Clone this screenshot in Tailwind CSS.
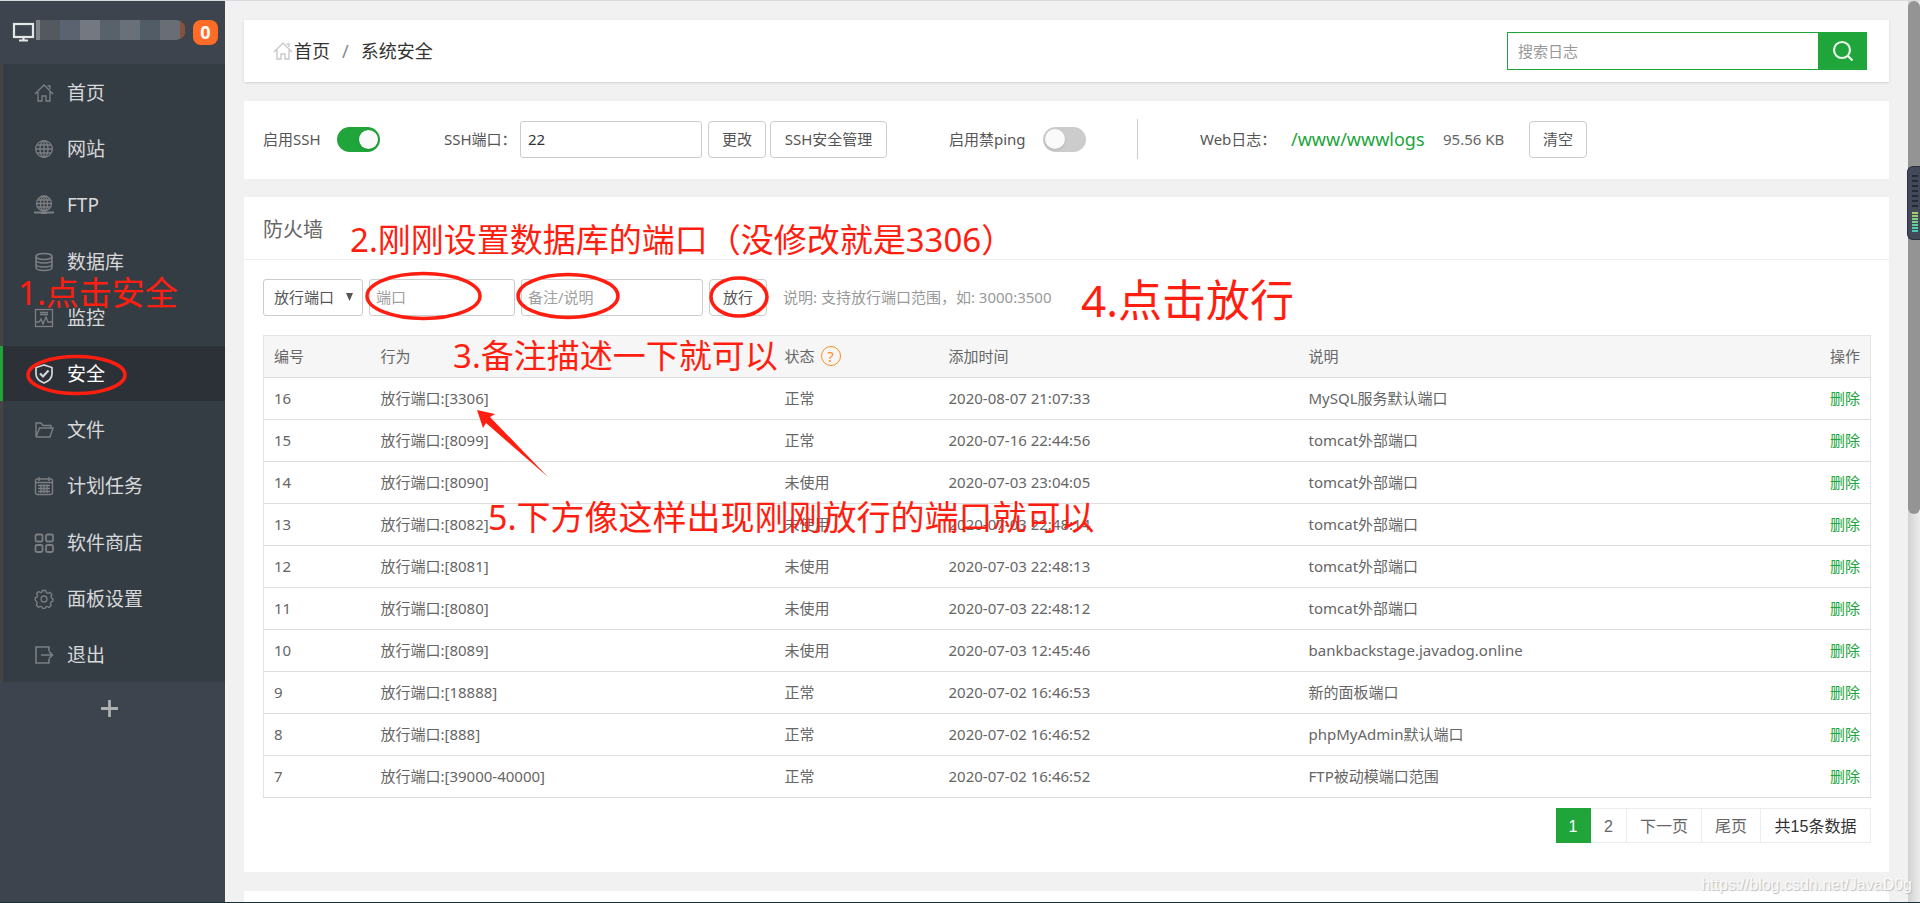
<!DOCTYPE html>
<html lang="zh-CN">
<head>
<meta charset="utf-8">
<title>系统安全</title>
<script src="https://cdn.jsdelivr.net/npm/@tailwindcss/browser@4"></script>
</head>
<body class="relative h-screen overflow-hidden bg-[#f1f1f1] font-['Noto_Sans','Noto_Sans_CJK_SC',sans-serif] text-[15px] leading-5 text-[#555]">
<div class="flex h-full border-t border-[#d9dade]">

  <aside class="flex w-[225px] shrink-0 flex-col bg-[#3d444d]">
    <div class="flex h-[63px] items-start pl-3 pt-[19px]">
      <svg class="h-6 w-6 shrink-0" viewBox="0 0 24 24" fill="none" stroke="#e4e6e8"><rect x="2" y="4" width="19" height="13" stroke-width="2.200"/><path d="M11.500 17v4M7 20.500h9" stroke-width="2.200"/></svg>
      <div class="flex h-5 w-[150px] overflow-hidden rounded-r-full">
        <span class="w-1 bg-[#81858b]"></span><span class="w-5 bg-[#53595f]"></span><span class="w-5 bg-[#5b6370]"></span><span class="w-5 bg-[#747880]"></span><span class="w-5 bg-[#59616a]"></span><span class="w-5 bg-[#6a7078]"></span><span class="w-5 bg-[#525c66]"></span><span class="w-5 bg-[#696d74]"></span><span class="w-[5px] bg-[#84523d]"></span>
      </div>
      <span class="ml-[7px] flex h-[25px] w-[25px] items-center justify-center rounded-lg bg-[#ff6c26] pb-0.5 text-[18px] font-bold text-white">0</span>
    </div>
    <nav class="grid h-[618px] grid-rows-11 border-l-[3px] border-[#444] bg-[#353d44] text-[19px] text-[#d7d9db] [&_a]:flex [&_a]:items-center [&_a]:gap-[13px] [&_a]:pl-[31px] [&_a]:pt-0.5 [&_svg]:h-5 [&_svg]:w-5 [&_svg]:shrink-0 [&_svg]:fill-none [&_svg]:stroke-[#7b7f82]">
      <a href="#"><svg viewBox="0 0 20 20" stroke-width="1.300"><path d="M1 11 10 2l9 9M4 9v9h4v-5h4v5h4V9M13.500 3H16v3"/></svg>首页</a>
      <a href="#"><svg viewBox="0 0 20 20" stroke-width="1.300"><circle cx="10" cy="10" r="8.300"/><ellipse cx="10" cy="10" rx="4" ry="8.300"/><path d="M10 2v16M2 10h16M3 6h14M3 14h14"/></svg>网站</a>
      <a href="#"><svg viewBox="0 0 20 20" stroke-width="1.300"><circle cx="10" cy="8.500" r="7.500"/><ellipse cx="10" cy="8.500" rx="3.500" ry="7.500"/><path d="M10 1v15M2.500 8.500h15M4 5h12M4 12h12"/><path d="M0 17.500h20M7 18h6" stroke-width="2"/></svg>FTP</a>
      <a href="#"><svg viewBox="0 0 20 20" stroke-width="1.500"><ellipse cx="10" cy="4.500" rx="8" ry="3"/><path d="M2 4.500v11c0 4 16 4 16 0v-11M2 8c0 4 16 4 16 0M2 12c0 4 16 4 16 0"/></svg>数据库</a>
      <a href="#"><svg viewBox="0 0 20 20" stroke-width="1.300"><rect x="1.500" y="1.500" width="17" height="17"/><path d="M6 4.500h8M6 6.500h8M2 14h3l2-3 2 5 3-7 2 5h4"/></svg>监控</a>
      <a href="#" class="-ml-[3px] mt-px border-l-[3px] border-[#20a53a] bg-[#2c3138] text-white"><svg class="stroke-[#d5d6d8]!" viewBox="0 0 20 20" stroke-width="1.700"><path d="M10 1 2 3.500V10c0 4 3 7 8 9 5-2 8-5 8-9V3.500Z"/><path d="m6 9.500 3 3 5.500-6" stroke-width="2.200"/></svg>安全</a>
      <a href="#"><svg viewBox="0 0 20 20" stroke-width="1.400"><path d="M2 17V3h5l2 2.500h8V8M2 17h14l3-9H5.500L2 17"/></svg>文件</a>
      <a href="#"><svg viewBox="0 0 20 20" stroke-width="1.400"><rect x="1.500" y="3" width="17" height="15.500" rx="2"/><path d="M2 6.500h16M5 1v4M15 1v4M4 9.500h12M4 12.500h12M4 15.500h12M7 8.500v8.500M10 8.500v8.500M13 8.500v8.500"/></svg>计划任务</a>
      <a href="#"><svg viewBox="0 0 20 20" stroke-width="1.800"><rect x="1.500" y="1.500" width="7" height="7" rx="1.500"/><rect x="12" y="1.500" width="7" height="7" rx="1.500"/><rect x="1.500" y="12" width="7" height="7" rx="1.500"/><rect x="12" y="12" width="7" height="7" rx="1.500"/></svg>软件商店</a>
      <a href="#"><svg viewBox="0 0 20 20" stroke-width="1.300"><path d="M8.300 1.500h3.400l.5 2 1.700.8 2-1 2 2.300-1 2 .7 1.700 1.400.7-.2 2.300-1.600.5-.8 1.700.8 1.900-2.100 2-1.900-1-1.600.7-.6 1.400H8.700l-.7-1.500-1.700-.7-2 1-2-2.200 1-2-.8-1.600L1.200 11V8.800l1.600-.6.7-1.700-.9-2 2.100-1.900 1.900 1 1.300-.6Z"/><circle cx="10" cy="10" r="3"/></svg>面板设置</a>
      <a href="#"><svg viewBox="0 0 20 20" stroke-width="1.600"><path d="M15 6V2H2v16h13v-4M7 10h11M15 6.500 18.500 10 15 13.500"/></svg>退出</a>
    </nav>
    <button class="ml-[101px] mt-4 flex h-5 w-[17px] items-center" aria-label="添加"><svg class="h-[17px] w-[17px]" viewBox="0 0 16 16" stroke="#adafb1" stroke-width="2.600"><path d="M8 0v16M0 8h16"/></svg></button>
  </aside>

  <main class="flex min-w-0 flex-1 flex-col px-[19px] pt-[19px]">
    <header class="flex h-[62px] shrink-0 items-center justify-between bg-white pl-7 pr-[22px] shadow-sm">
      <div class="flex items-center text-[18px] text-[#333]">
        <svg class="h-5 w-[22px]" viewBox="0 0 20 20" fill="none" stroke="#c8c8c8" stroke-width="1.400"><path d="M1 11 10 2l9 9M4 9v9h4v-5h4v5h4V9M13.500 3H16v3"/></svg>
        <a href="#">首页</a><span class="px-3 text-[#888]">/</span><span>系统安全</span>
      </div>
      <form class="flex h-[38px] w-[360px]">
        <input type="text" aria-label="搜索日志" placeholder="搜索日志" class="min-w-0 flex-1 border border-r-0 border-[#20a53a] pl-2.5 outline-none placeholder:text-[#999]">
        <button type="button" aria-label="搜索" class="flex w-[49px] items-center justify-center bg-[#20a53a]"><svg class="h-6 w-6" viewBox="0 0 24 24" fill="none" stroke="#e9f6eb" stroke-width="2.200"><circle cx="11" cy="11" r="8"/><path d="m16.500 16.500 5 5"/></svg></button>
      </form>
    </header>

    <section class="mt-[19px] flex h-[78px] shrink-0 items-center bg-white pb-0.5 pl-[19px]">
      <label for="ssh" class="w-[74px]">启用SSH</label>
      <input id="ssh" type="checkbox" checked class="h-[25px] w-[43px] appearance-none rounded-full bg-[#20a53a] p-[3px] before:ml-[19px] before:block before:size-[19px] before:rounded-full before:bg-[#fafafa] before:shadow">
      <label for="port" class="ml-16 w-[76px] whitespace-nowrap">SSH端口：</label>
      <input id="port" type="text" value="22" class="h-[37px] w-[182px] rounded-[3px] border border-[#ccc] pl-[7px] text-[#333]">
      <button class="ml-1.5 h-[37px] w-[58px] rounded border border-[#ccc]">更改</button>
      <button class="ml-1 h-[37px] w-[117px] rounded border border-[#ccc]">SSH安全管理</button>
      <label for="ping" class="ml-[62px] w-[94px]">启用禁ping</label>
      <input id="ping" type="checkbox" class="h-[25px] w-[43px] appearance-none rounded-full bg-[#ccc] p-0.5 before:block before:size-5 before:rounded-full before:bg-[#fafafa] before:shadow">
      <div class="ml-[51px] h-10 w-px bg-[#ccc]"></div>
      <span class="ml-[62px] w-[91px] whitespace-nowrap">Web日志：</span>
      <a href="#" class="w-[152px] text-[18px] text-[#20a53a]">/www/wwwlogs</a>
      <span class="w-[86px] text-[#666]">95.56 KB</span>
      <button class="h-[37px] w-[58px] rounded border border-[#ccc]">清空</button>
    </section>

    <section class="mt-[18px] flex h-[675px] shrink-0 flex-col bg-white">
      <h2 class="flex h-[63px] items-center border-b border-[#eee] pl-[19px] pt-1 text-[20px] text-[#666]">防火墙</h2>
      <form class="mt-[19px] flex items-center pl-[19px]">
        <div class="relative">
          <select aria-label="放行方式" class="h-[37px] w-[100px] appearance-none rounded-[3px] border border-[#ccc] pb-0.5 pl-2.5"><option>放行端口</option></select>
          <svg class="pointer-events-none absolute right-2.5 top-3.5 h-2 w-[7px]" viewBox="0 0 7 8" fill="#555"><path d="M0 0h7L3.500 8Z"/></svg>
        </div>
        <input type="text" aria-label="端口" placeholder="端口" class="ml-1.5 h-[37px] w-[146px] rounded-[3px] border border-[#ccc] pb-0.5 pl-1.5 placeholder:text-[#a0a0a0]">
        <input type="text" aria-label="备注/说明" placeholder="备注/说明" class="ml-1.5 h-[37px] w-[182px] rounded-[3px] border border-[#ccc] pb-0.5 pl-1.5 placeholder:text-[#a0a0a0]">
        <button type="button" class="ml-1.5 h-[37px] w-[58px] rounded border border-[#ccc] pb-0.5">放行</button>
        <span class="ml-4 pb-0.5 text-[#999]">说明: 支持放行端口范围，如: 3000:3500</span>
      </form>
      <div class="ml-[19px] mr-[18px] mt-[19px]">
        <table class="w-full table-fixed border-collapse border border-[#e4e4e4] text-left text-[#666] [&_a]:text-[#20a53a] [&_td]:px-2.5 [&_td]:pb-0.5 [&_th]:px-2.5 [&_th]:pb-0.5 [&_th]:font-normal [&_tr]:h-[42px] [&_tr]:border-b [&_tr]:border-[#ddd]">
          <thead class="bg-[#f6f6f6]"><tr><th class="w-[107px]">编号</th><th class="w-[404px]">行为</th><th class="w-[164px]"><span class="flex items-center gap-1.5">状态<a href="#" class="flex size-5 items-center justify-center rounded-full border border-[#ff8c1a] text-[#ff8c1a]!">?</a></span></th><th class="w-[360px]">添加时间</th><th>说明</th><th class="w-[100px] text-right">操作</th></tr></thead>
          <tbody class="[&_td:last-child]:text-right">
            <tr><td>16</td><td>放行端口:[3306]</td><td>正常</td><td>2020-08-07 21:07:33</td><td>MySQL服务默认端口</td><td><a href="#">删除</a></td></tr>
            <tr><td>15</td><td>放行端口:[8099]</td><td>正常</td><td>2020-07-16 22:44:56</td><td>tomcat外部端口</td><td><a href="#">删除</a></td></tr>
            <tr><td>14</td><td>放行端口:[8090]</td><td>未使用</td><td>2020-07-03 23:04:05</td><td>tomcat外部端口</td><td><a href="#">删除</a></td></tr>
            <tr><td>13</td><td>放行端口:[8082]</td><td>未使用</td><td>2020-07-03 22:48:14</td><td>tomcat外部端口</td><td><a href="#">删除</a></td></tr>
            <tr><td>12</td><td>放行端口:[8081]</td><td>未使用</td><td>2020-07-03 22:48:13</td><td>tomcat外部端口</td><td><a href="#">删除</a></td></tr>
            <tr><td>11</td><td>放行端口:[8080]</td><td>未使用</td><td>2020-07-03 22:48:12</td><td>tomcat外部端口</td><td><a href="#">删除</a></td></tr>
            <tr><td>10</td><td>放行端口:[8089]</td><td>未使用</td><td>2020-07-03 12:45:46</td><td>bankbackstage.javadog.online</td><td><a href="#">删除</a></td></tr>
            <tr><td>9</td><td>放行端口:[18888]</td><td>正常</td><td>2020-07-02 16:46:53</td><td>新的面板端口</td><td><a href="#">删除</a></td></tr>
            <tr><td>8</td><td>放行端口:[888]</td><td>正常</td><td>2020-07-02 16:46:52</td><td>phpMyAdmin默认端口</td><td><a href="#">删除</a></td></tr>
            <tr><td>7</td><td>放行端口:[39000-40000]</td><td>正常</td><td>2020-07-02 16:46:52</td><td>FTP被动模端口范围</td><td><a href="#">删除</a></td></tr>
          </tbody>
        </table>
        <div class="mt-2.5 flex h-[35px] justify-end font-['Liberation_Sans','Noto_Sans_CJK_SC',sans-serif] text-base text-[#666] [&>*]:flex [&>*]:items-center [&>*]:justify-center [&>*]:border-y [&>*]:border-r [&>*]:border-[#ececec] [&>*]:pt-[3px]">
          <span class="w-[35px] border-[#20a53a]! bg-[#20a53a] text-white">1</span><a href="#" class="w-9">2</a><a href="#" class="w-[75px]">下一页</a><a href="#" class="w-[59px]">尾页</a><span class="w-[110px] text-[#333]">共15条数据</span>
        </div>
      </div>
    </section>
    <section class="mt-[19px] min-h-0 flex-1 bg-white"></section>
  </main>

  <div class="w-3 shrink-0 bg-linear-to-r from-[#d2d2d2] to-[#ececec]"><div class="h-[513px] rounded-full bg-[#949494]"></div></div>
</div>

<!-- Desktop level meter docked at the screen edge -->
<div class="absolute right-0 top-[166px] flex h-[74px] w-[13px] flex-col gap-0.5 rounded-l-md border border-r-0 border-[#2d313d] bg-[#434959] pl-1 pr-0.5 pt-2">
  <div class="h-[34px] bg-[repeating-linear-gradient(#252933_0_2px,#434959_2px_5px)]"></div>
  <div class="h-[22px] bg-[repeating-linear-gradient(#434959_0_1px,transparent_1px_3px),linear-gradient(#b2cf5c,#35d0ba)]"></div>
</div>
<div class="absolute inset-x-0 bottom-0 h-px bg-[#1c2f36]"></div>
<p class="absolute bottom-1.5 right-2 font-['Liberation_Sans',sans-serif] text-base leading-6 text-[#fafafa] [text-shadow:1px_1px_1px_#bbb]">https://blog.csdn.net/JavaD0g</p>

<!-- Tutorial annotations -->
<svg class="pointer-events-none absolute left-0 top-0 h-[600px] w-[1200px]" viewBox="0 0 1200 600" fill="none" stroke="#ff1e10" stroke-width="3.500">
  <ellipse cx="76.500" cy="375" rx="48.500" ry="18.500"/>
  <ellipse cx="423.500" cy="296" rx="56.500" ry="22.500"/>
  <ellipse cx="568" cy="296" rx="50" ry="21.500"/>
  <ellipse cx="739" cy="297" rx="28" ry="19"/>
  <path d="M477 410 495 414 490 417 548 477 486 423 483 428Z" fill="#ff1e10" stroke="none"/>
</svg>
<div class="text-[33px] leading-10 whitespace-nowrap text-[#ff1e10]">
  <p class="absolute left-[18px] top-[273px]">1.点击安全</p>
  <p class="absolute left-[350px] top-[220px]">2.刚刚设置数据库的端口（没修改就是3306）</p>
  <p class="absolute left-[453px] top-[336px]">3.备注描述一下就可以</p>
  <p class="absolute left-[1081px] top-[280px] text-[44px]">4.点击放行</p>
  <p class="absolute left-[488px] top-[497px] text-[34px]">5.下方像这样出现刚刚放行的端口就可以</p>
</div>
</body>
</html>
